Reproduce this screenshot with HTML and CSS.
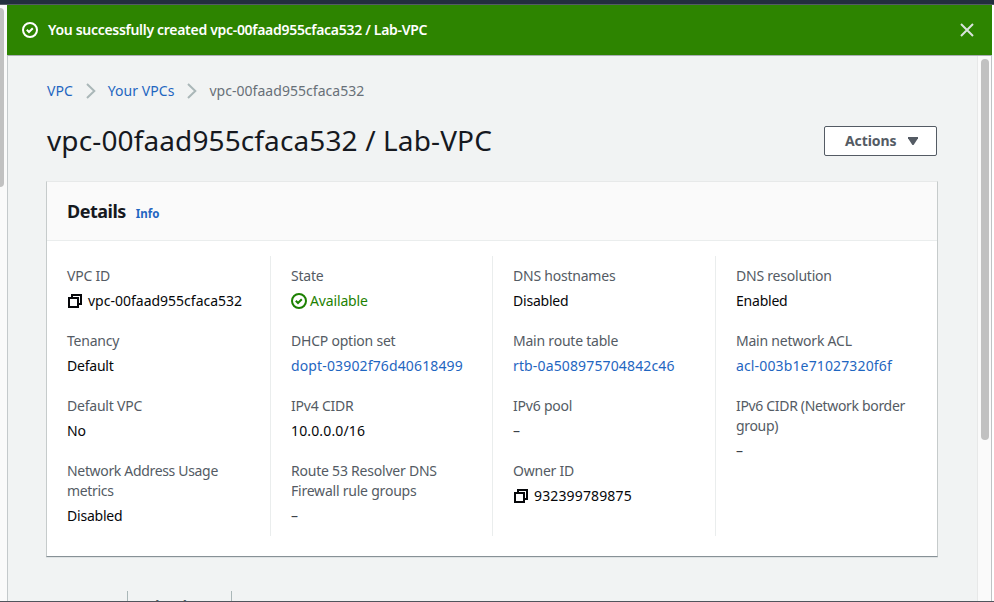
FILE: index.html
```html
<!DOCTYPE html>
<html lang="en">
<head>
<meta charset="utf-8">
<title>VPC details</title>
<link rel="stylesheet" href="styles.css">
</head>
<body>
<div class="topbar"></div>
<div class="shell">
  <aside class="nav-edge"><div class="nav-thumb"></div></aside>
  <div class="workspace">
    <div class="flash">
      <svg class="status-icon" viewBox="0 0 16 16"><circle cx="8" cy="8" r="7"/><path d="M4.8 7.8l2.2 2.2 3.8-3.8"/></svg>
      <span class="flash-text">You successfully created vpc-00faad955cfaca532 / Lab-VPC</span>
      <svg class="close" viewBox="0 0 14 14"><path d="M1 1l12 12M13 1L1 13"/></svg>
    </div>
    <div class="scroller">
      <main class="page">
        <nav class="crumbs">
          <a>VPC</a>
          <svg class="chev" viewBox="0 0 10 16"><path d="M1 1l7.3 7L1 15"/></svg>
          <a>Your VPCs</a>
          <svg class="chev" viewBox="0 0 10 16"><path d="M1 1l7.3 7L1 15"/></svg>
          <span>vpc-00faad955cfaca532</span>
        </nav>
        <div class="title-row">
          <h1>vpc-00faad955cfaca532 / Lab-VPC</h1>
          <button class="actions"><span>Actions</span><svg viewBox="0 0 10 8"><path d="M0 0h10v1.2L5.6 8H4.4L0 1.2z"/></svg></button>
        </div>
        <section class="card">
          <header class="card-head"><h2>Details</h2><a class="info">Info</a></header>
          <div class="columns">
            <div class="col">
              <dl><dt>VPC ID</dt><dd><svg class="copy" viewBox="0 0 14 14"><path d="M1 4h9v9H1zM4 4V1h9v9h-3"/></svg><span>vpc-00faad955cfaca532</span></dd></dl>
              <dl><dt>Tenancy</dt><dd>Default</dd></dl>
              <dl><dt>Default VPC</dt><dd>No</dd></dl>
              <dl><dt class="long">Network Address Usage metrics</dt><dd>Disabled</dd></dl>
            </div>
            <div class="col">
              <dl><dt>State</dt><dd class="ok"><svg class="status-icon" viewBox="0 0 16 16"><circle cx="8" cy="8" r="7"/><path d="M4.8 7.8l2.2 2.2 3.8-3.8"/></svg><span>Available</span></dd></dl>
              <dl><dt>DHCP option set</dt><dd class="id"><a>dopt-03902f76d40618499</a></dd></dl>
              <dl><dt>IPv4 CIDR</dt><dd class="id">10.0.0.0/16</dd></dl>
              <dl><dt>Route 53 Resolver DNS Firewall rule groups</dt><dd class="none">–</dd></dl>
            </div>
            <div class="col">
              <dl><dt>DNS hostnames</dt><dd>Disabled</dd></dl>
              <dl><dt>Main route table</dt><dd class="id"><a>rtb-0a508975704842c46</a></dd></dl>
              <dl><dt>IPv6 pool</dt><dd class="none">–</dd></dl>
              <dl><dt>Owner ID</dt><dd class="id"><svg class="copy" viewBox="0 0 14 14"><path d="M1 4h9v9H1zM4 4V1h9v9h-3"/></svg><span>932399789875</span></dd></dl>
            </div>
            <div class="col">
              <dl><dt>DNS resolution</dt><dd>Enabled</dd></dl>
              <dl><dt>Main network ACL</dt><dd class="id"><a>acl-003b1e71027320f6f</a></dd></dl>
              <dl><dt class="long">IPv6 CIDR (Network border group)</dt><dd class="none">–</dd></dl>
            </div>
          </div>
        </section>
        <div class="tabs"><span class="tab active">CIDRs</span><span class="tab">Flow logs</span><span class="tab">Tags</span></div>
      </main>
      <div class="track"><div class="thumb"></div></div>
    </div>
  </div>
</div>
<div class="footer-line"></div>
</body>
</html>
```
FILE: styles.css
```css
* { box-sizing: border-box; }
body {
  margin: 0; width: 994px; height: 602px; overflow: hidden;
  display: flex; flex-direction: column; background: #fff;
  font: 14px/20px "Noto Sans", "Open Sans", sans-serif; color: #16191f;
  letter-spacing: -0.22px;
}
h1, h2, dl, dt, dd { margin: 0; font-weight: 400; }
a { color: #1f66c1; }
svg { display: block; flex: none; fill: none; stroke: currentColor; stroke-width: 2; }
.topbar { height: 5px; flex: none; background: #232f3e; border-bottom: 1px solid #545b64; }
.shell { flex: 1; min-height: 0; display: flex; padding-right: 2px; }
.nav-edge { width: 7px; background: #fafafa; padding-top: 3px; }
.nav-thumb { width: 4px; height: 179px; background: #c1c1c1; border-radius: 0 4px 4px 0; }
.workspace { flex: 1; min-width: 0; display: flex; flex-direction: column; }
.flash {
  height: 50px; flex: none; display: flex; align-items: center;
  padding: 0 18px 0 15px; background: #2d8400; color: #fff; font-weight: 600;
}
.status-icon { width: 16px; height: 16px; }
.flash-text { margin-left: 10px; flex: 1; white-space: nowrap; letter-spacing: -0.3px; }
.close { width: 14px; height: 14px; color: #d9e3dc; }
.scroller {
  flex: 1; min-height: 0; display: flex;
  border-top: 1px solid #a9aeb3; border-left: 1px solid #c4c9cb; border-right: 1px solid #bfc2c4;
}
.page { flex: 1; min-width: 0; overflow: hidden; background: #f1f3f3; padding: 25px 39px 0 38px; }
.crumbs { display: flex; align-items: center; height: 20px; padding-left: 1px; color: #687078; letter-spacing: 0.04px; }
.chev { width: 10px; height: 16px; margin: 0 12px 0 13px; color: #aab7b8; }
.title-row { display: flex; justify-content: space-between; align-items: center; height: 36px; margin-top: 22px; padding: 0 1px; }
h1 { font-size: 28px; line-height: 36px; white-space: nowrap; letter-spacing: 0.12px; padding-bottom: 2px; }
.actions {
  display: flex; align-items: center; justify-content: space-between;
  width: 113px; height: 30px; padding: 0 18px 0 20px; background: #fff;
  border: 1px solid #545b64; border-radius: 2px; color: #545b64;
  font: 700 14px/20px "Noto Sans", sans-serif; letter-spacing: -0.1px;
}
.actions svg { width: 10px; height: 8px; fill: currentColor; stroke: none; }
.card {
  height: 376px; margin-top: 22px; background: #fff;
  border: 1px solid #c6cbcb; border-top-color: #e7e9e9; border-bottom-color: #879196;
  box-shadow: 0 1px 0 #dfe3e4;
}
.card-head { height: 59px; padding: 0 20px; display: flex; align-items: baseline; line-height: 58px; background: #fafafa; border-bottom: 1px solid #eaeded; }
h2 { font-size: 18px; font-weight: 700; letter-spacing: -0.5px; }
.info { margin-left: 10px; font-size: 11.5px; font-weight: 700; letter-spacing: 0; }
.columns { display: grid; grid-template-columns: 223px 222px 223px 222px; margin-top: 15px; height: 280px; }
.col { display: flex; flex-direction: column; gap: 20px; padding: 10px 20px; }
.col + .col { border-left: 1px solid #eaeded; }
dt { color: #545b64; margin-bottom: 5px; }
dt.long { letter-spacing: -0.33px; }
dd { display: flex; align-items: center; height: 20px; white-space: nowrap; color: #06070a; }
dd span { letter-spacing: 0; }
dd.id, dd.id span { letter-spacing: 0.14px; }
.copy { width: 14px; height: 14px; margin: 0 6px 0 1px; }
dd.ok { color: #1d8102; gap: 3px; }
.ok span { letter-spacing: -0.15px; }
dd.none { color: #3c424a; }
.tabs { display: flex; margin-top: 34px; height: 24px; }
.tab { padding: 5px 20px 0; border-left: 1px solid #aab7b8; white-space: nowrap; height: 24px; color: #545b64; font-weight: 700; }
.tab.active { color: #d45b07; border-left-color: transparent; }
.track { width: 14px; background: #fafafa; border-left: 1px solid #e7e8e8; padding: 3px 0 0 3px; }
.thumb { width: 8px; height: 381px; border-radius: 4px; background: #c1c1c1; }
.footer-line { height: 1px; flex: none; background: #50545c; }
```
